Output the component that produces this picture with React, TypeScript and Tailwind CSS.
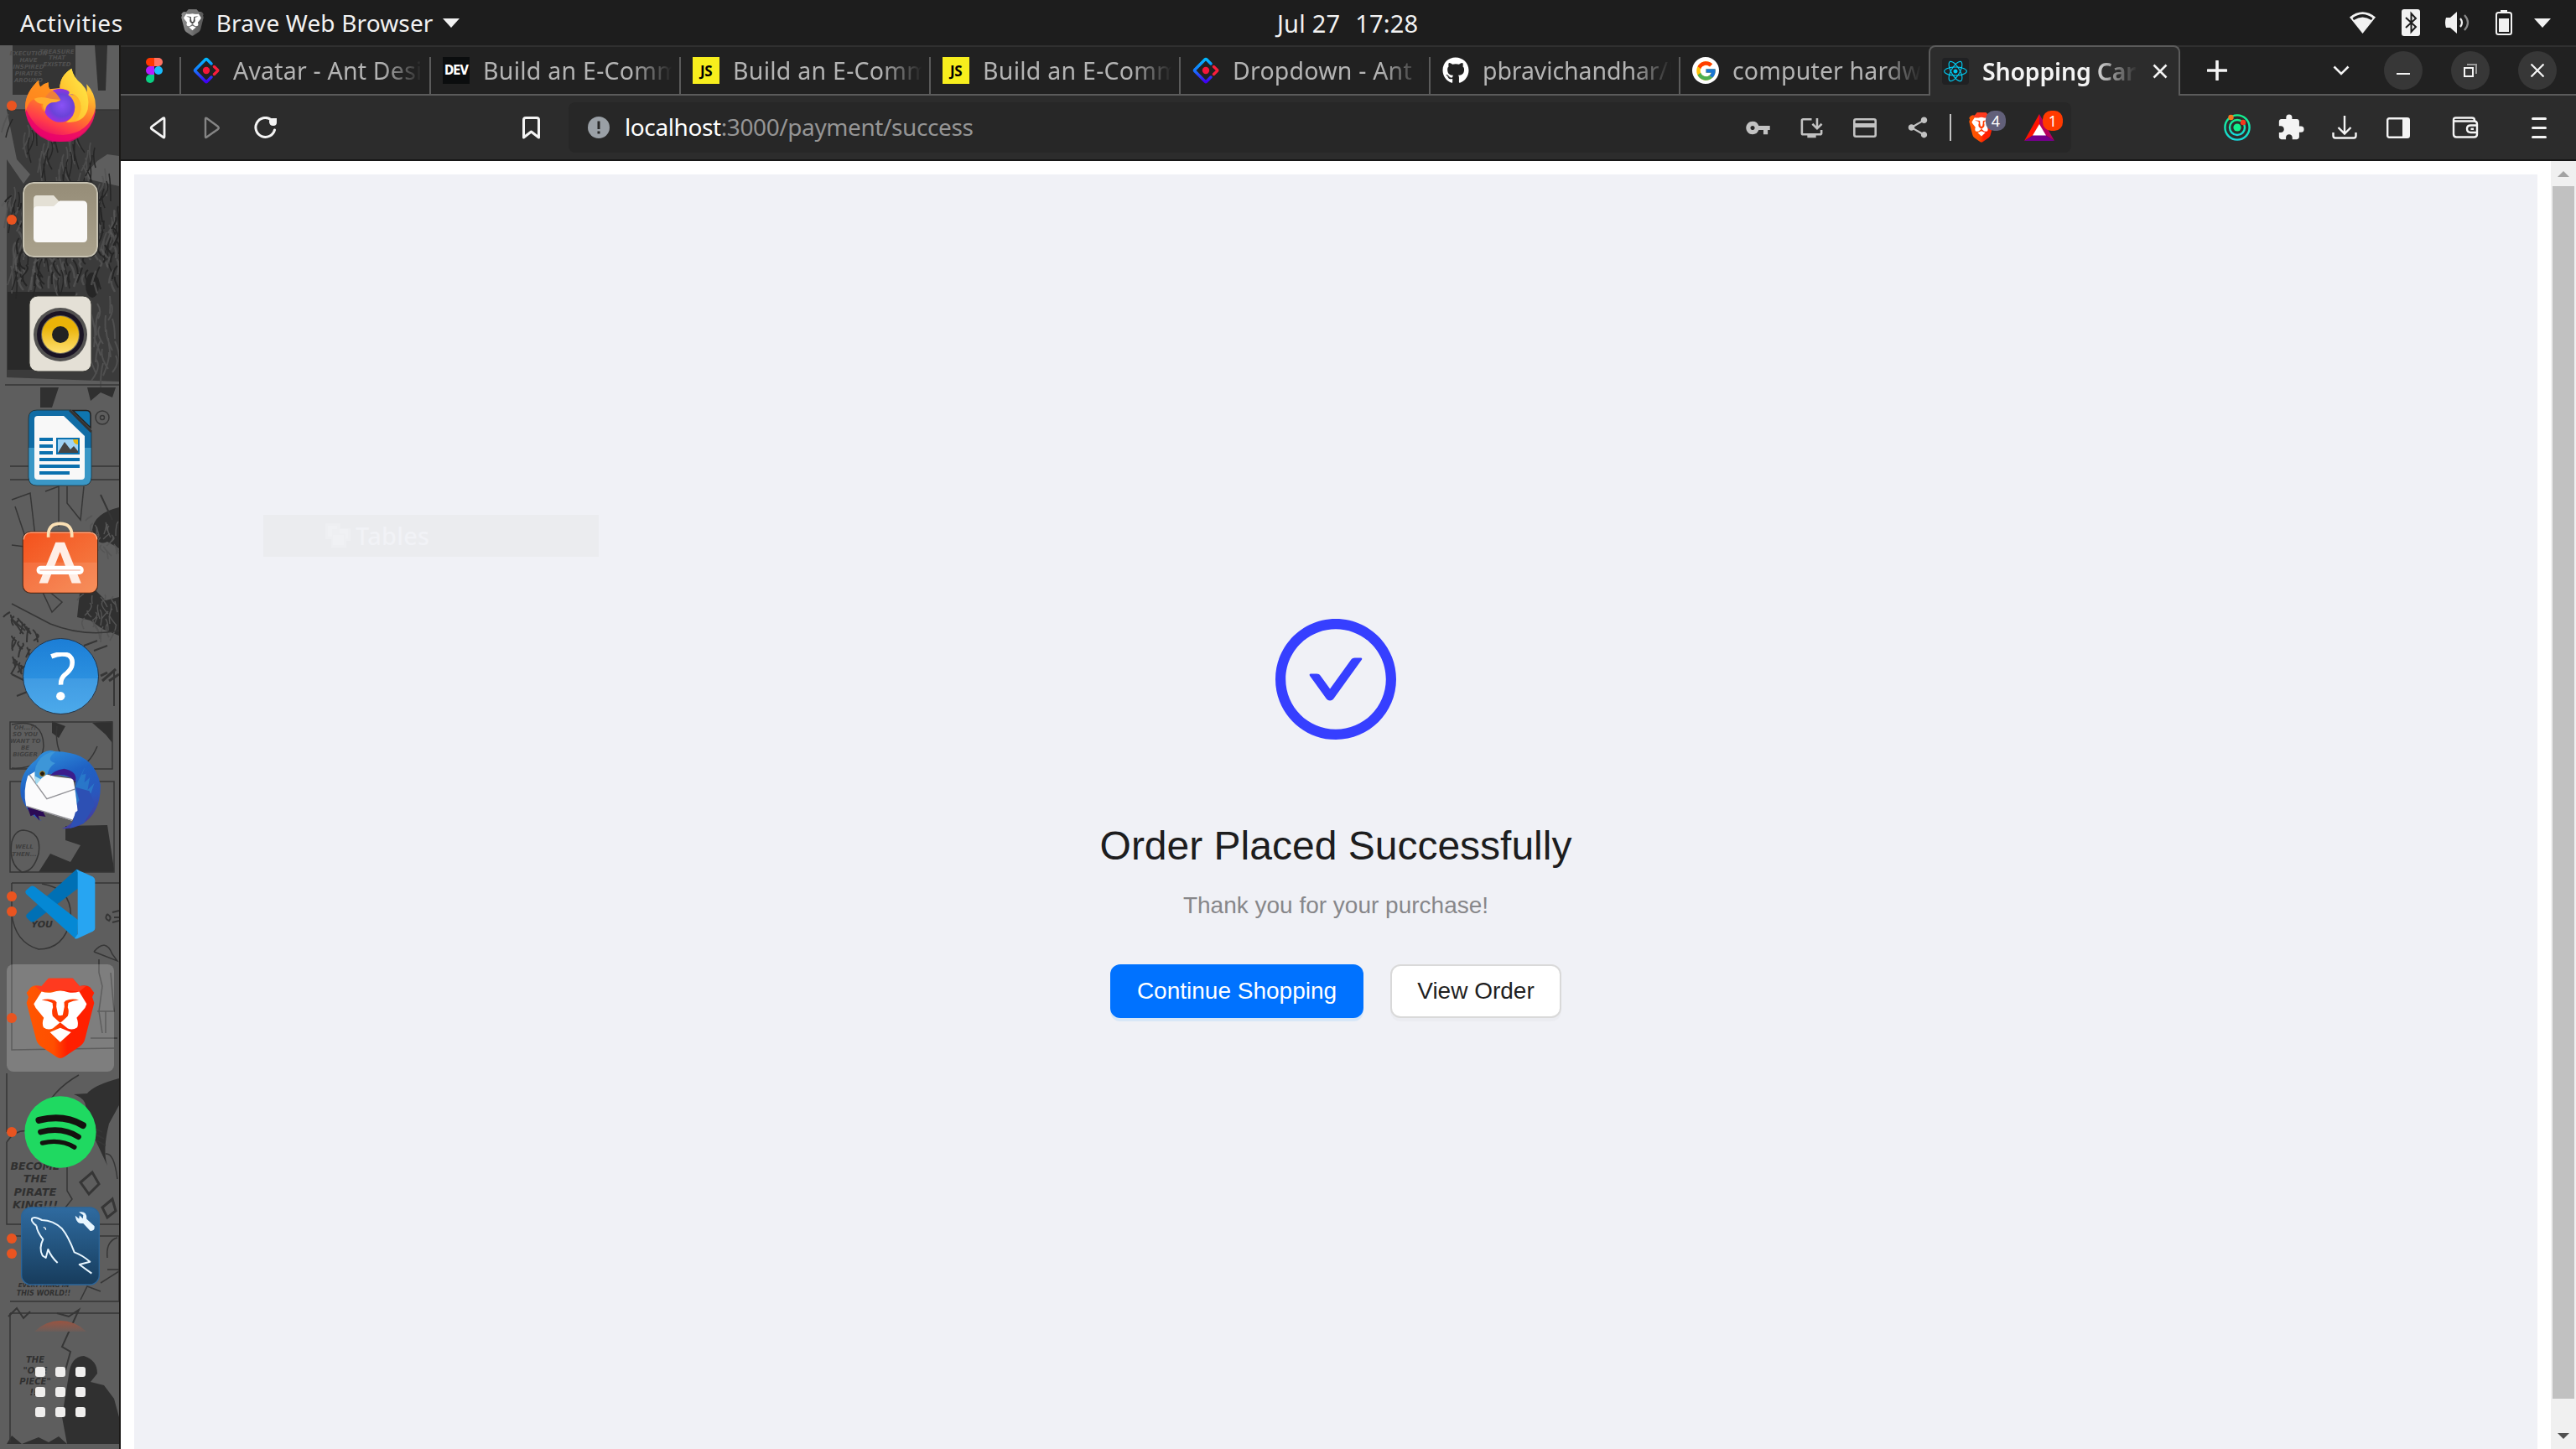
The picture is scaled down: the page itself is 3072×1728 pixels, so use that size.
import React from "react";
import { FaReact, FaGithub } from "react-icons/fa";
import { FcGoogle } from "react-icons/fc";
import { MdVpnKey, MdShare, MdExtension, MdOutlineInstallDesktop } from "react-icons/md";

const UI = "font-['Noto_Sans',sans-serif]";

/* ---------- shared marks ---------- */

function BraveLion({ className, mono = false, id }: { className?: string; mono?: boolean; id: string }) {
  return (
    <svg className={className} viewBox="94 916 247 292" preserveAspectRatio="none">
      <defs>
        <linearGradient id={id} x1="0" x2="1">
          <stop offset="0" stopColor={mono ? "#8d8d8d" : "#ff5601"} />
          <stop offset="0.4" stopColor={mono ? "#7a7a7a" : "#ff4f00"} />
          <stop offset="0.6" stopColor={mono ? "#666" : "#ff1f00"} />
          <stop offset="1" stopColor={mono ? "#5a5a5a" : "#ff2000"} />
        </linearGradient>
      </defs>
      <path
        d="M175 918H262L286 946Q312 940 324 950L339 970L332 985L339 1006L306 1136Q302 1152 288 1162L232 1200Q217 1210 203 1200L147 1162Q134 1152 130 1136L96 1006L103 985L96 970L112 950Q124 940 150 946Z"
        fill={`url(#${id})`}
      />
      <path d="M175 918H262L286 946L310 945L286 966L217 960L150 966L125 945L150 946Z" fill={mono ? "#777" : "#ff3a1f"} />
      <path
        d="M150 966Q170 972 190 968Q217 958 245 968Q265 972 285 966L312 1010L306 1024L276 1060Q284 1080 278 1094Q262 1106 244 1098L217 1076L190 1098Q172 1106 157 1094Q150 1080 158 1060L129 1024L122 1010ZM180 1112L217 1096L256 1112L217 1147Z"
        fill="#fff"
      />
      <path
        d="M150 996Q176 988 198 998L204 1004L203 1020L209 1050L217 1052L226 1050L232 1020L231 1004L237 998Q259 988 284 996Q262 998 246 1006L244 1022Q250 1036 244 1054L222 1074L217 1076L212 1074L190 1054Q185 1036 191 1022L189 1006Q172 998 150 996Z"
        fill={mono ? "#4b4b4b" : "#ff3a00"}
      />
    </svg>
  );
}

function AntdLogo({ id }: { id: string }) {
  return (
    <svg className="h-8 w-8" viewBox="0 0 32 32" fill="none" strokeWidth="3.4" strokeLinejoin="round" strokeLinecap="round">
      <defs>
        <linearGradient id={id} x1="0" y1="0" x2="0" y2="1">
          <stop offset="0" stopColor="#00b7ff" />
          <stop offset="0.5" stopColor="#1677ff" />
          <stop offset="1" stopColor="#4100f5" />
        </linearGradient>
      </defs>
      <path d="M22 8L16.8 2.8Q16 2 15.2 2.8L2.8 15.2Q2 16 2.8 16.8L15.2 29.2Q16 30 16.8 29.2L22 24" stroke={`url(#${id})`} />
      <path d="M25.5 11.5L29.5 15.4Q30 16 29.5 16.6L25.5 20.5" stroke="#fa1e3c" />
      <circle cx="16" cy="16" r="4.2" fill="#f5173a" />
    </svg>
  );
}

function Figma() {
  return (
    <svg className="h-[30px] w-5" viewBox="0 0 20 30">
      <path d="M5 0H10V10H5A5 5 0 0 1 5 0Z" fill="#ff3700" />
      <path d="M10 0H15A5 5 0 0 1 15 10H10Z" fill="#ff7262" />
      <path d="M5 10H10V20H5A5 5 0 0 1 5 10Z" fill="#b61aff" />
      <circle cx="15" cy="15" r="5" fill="#19bcfe" />
      <path d="M5 20H10V25A5 5 0 1 1 5 20Z" fill="#0acf83" />
    </svg>
  );
}

/* ---------- system bar ---------- */

function TopBar() {
  return (
    <header className={`relative flex h-[54px] shrink-0 items-center bg-[#1d1d1d] text-[28px] leading-none text-[#f2f2f2] ${UI}`}>
      <span className="ml-6 tracking-[0.6px]">Activities</span>
      <BraveLion id="bm" mono className="ml-[69px] h-8 w-[27px]" />
      <span className="ml-[15px] tracking-[0.15px]">Brave Web Browser</span>
      <svg className="ml-[11px] h-[11px] w-5" viewBox="0 0 20 11"><path d="M0 0H20L10 11Z" fill="#f2f2f2" /></svg>
      <div className="absolute left-[1523px] flex gap-[18px] text-[29px]">
        <span className="tracking-[0.2px]">Jul 27</span>
        <span className="tracking-[0.2px]">17:28</span>
      </div>
      <div className="ml-auto mr-[30px] flex items-center">
        <svg className="h-[26px] w-[31px]" viewBox="0 0 31 26">
          <path d="M15.500 26L0 6.500Q15.500 -6 31 6.500Z" fill="#f2f2f2" />
          <path d="M3.500 7.500Q15.500 -1.500 27.500 7.500L26 10Q15.500 3 5 10Z" fill="#1d1d1d" />
        </svg>
        <svg className="ml-[31px] h-8 w-[22px]" viewBox="0 0 22 32">
          <rect width="22" height="32" rx="3" fill="#f2f2f2" />
          <path d="M5 10L17 21L11.500 27V5L17 11L5 22" fill="none" stroke="#1d1d1d" strokeWidth="2" />
        </svg>
        <svg className="ml-[30px] h-[26px] w-[30px]" viewBox="0 0 30 26" fill="none">
          <path d="M1 7H6L14 0V26L6 19H1Q-1 13 1 7Z" fill="#f2f2f2" />
          <path d="M18 8Q22 13 18 18" stroke="#f2f2f2" strokeWidth="2.200" />
          <path d="M23 4Q31 13 23 22" stroke="#8a8a8a" strokeWidth="2.200" />
        </svg>
        <svg className="ml-[30px] h-[30px] w-5" viewBox="0 0 20 30">
          <rect x="6" width="8" height="3" fill="#f2f2f2" />
          <rect x="1" y="3" width="18" height="26" rx="2.500" fill="none" stroke="#f2f2f2" strokeWidth="2" />
          <rect x="4" y="10" width="12" height="16" fill="#f2f2f2" />
        </svg>
        <svg className="ml-[26px] h-[11px] w-5" viewBox="0 0 20 11"><path d="M0 0H20L10 11Z" fill="#f2f2f2" /></svg>
      </div>
    </header>
  );
}

/* ---------- dock ---------- */

function strokes(count: number, x0: number, y0: number, w: number, h: number, len: number) {
  return Array.from({ length: count }, (_, i) => {
    const x = x0 + ((i * 37) % w);
    const y = y0 + ((i * 53) % h);
    return `M${x} ${y}q${((i * 7) % 13) - 6} ${len / 2} ${((i * 11) % 17) - 8} ${len + ((i * 5) % 12)}`;
  }).join("");
}

function DockWallpaper() {
  const hatch = strokes(60, 10, 136, 128, 190, 22);
  const foliage = strokes(70, 10, 238, 130, 100, 8);
  const lowHatch = strokes(30, 92, 350, 48, 84, 18);
  const shade = strokes(24, 100, 708, 40, 44, 8);
  const grass = strokes(30, 12, 730, 34, 76, 6);
  const hair = strokes(20, 110, 615, 32, 40, 6);
  const lettering = "font-['DejaVu_Sans',sans-serif] font-bold italic";
  return (
    <svg className="absolute inset-0 h-full w-full" viewBox="0 54 142 1674" fill="none" stroke="#363636" strokeWidth="1.500">
      <g stroke="none" fill="#303030">
        <path d="M15 54H90V113H15Z" fill="#343434" />
        <path d="M113 54H128L126 108H117Z" />
        <path d="M8 131H142V186L128 184L116 192L103 206L106 214L142 222V455L8 450V190L28 219L36 208L20 190Z" fill="#3b3b3b" />
        <path d="M9 348H90V441H9Z" fill="#292929" />
        <path d="M48 462H70L62 486H48ZM104 462H138L134 474L120 468L108 478Z" />
        <path d="M142 605Q112 612 110 632Q116 652 128 646L142 654Z" />
        <path d="M95 708L114 704L126 716L142 712V758L122 750L108 740L92 736Z" />
        <path d="M62 860L78 866L70 880L62 874ZM110 862L134 860V886L126 876Z" />
        <path d="M78 985L128 984L136 1036V1040H46L60 1018L84 1028L96 1008L78 1002Z" />
        <path d="M142 1286Q112 1294 104 1304L88 1305Q108 1312 100 1330L128 1390Q122 1372 130 1340L142 1318Z" />
        <path d="M82 1640Q84 1618 100 1617Q116 1622 116 1638L108 1648L124 1652L136 1668L142 1690V1722H80L74 1690L78 1664Z" />
        <path d="M8 1722L14 1712L26 1722L46 1714L58 1720L70 1713L80 1722Z" />
        <ellipse cx="110" cy="340" rx="8" ry="15" fill="#262626" />
      </g>
      <path d={hatch} stroke="#525252" strokeWidth="1.800" opacity="0.800" />
      <path d={hatch} stroke="#262626" transform="translate(5 6)" />
      <path d={foliage} stroke="#595959" strokeWidth="2.500" opacity="0.700" />
      <path d={foliage} stroke="#252525" strokeWidth="2" transform="translate(4 -5)" />
      <path d={lowHatch} stroke="#505050" strokeWidth="2" />
      <path d={shade} stroke="#545454" />
      <path d={grass} stroke="#343434" strokeWidth="2" />
      <path d={hair} stroke="#555" />
      <path d="M8 131H142M6 459H142M12 556H142M12 572H142M14 596L36 588L42 640M18 604L42 676M54 586L70 580V628M80 580V600L96 620L100 580M52 700L74 718L62 730L48 700M14 650L46 654M14 720L60 744Q100 760 142 752" />
      <path d="M15 790L34 798M14 804L34 814M16 740L30 752M20 830L40 822M100 770L116 764M112 776L128 770M120 590L134 620M136 800V842" strokeWidth="2" />
      <path d="M120 806L128 802M122 812L138 798M130 812L142 804" strokeWidth="3" />
      <path d="M12 861H134V917H12ZM12 932H136V1040H12ZM14 1053H142M14 1053V1252L136 1250M8 1280V1350M8 1362V1460H142M12 1474H142V1552H12M12 1566H142M12 1566V1720" />
      <path d="M14 864Q52 856 52 890Q50 918 14 916M68 866Q64 900 86 914Q104 918 116 890M28 990Q50 992 46 1018Q40 1040 26 1040Q10 1030 14 1004Q18 990 28 990Z" />
      <path d="M50 1054Q88 1060 84 1098Q76 1132 46 1132Q18 1124 14 1090M94 1282Q62 1300 50 1330M8 1362Q20 1344 40 1350M80 1384V1420L86 1430L78 1440" />
      <path d="M112 1135Q126 1118 134 1138L140 1146L112 1135M118 1144V1160L122 1176L118 1206L122 1232M132 1160L136 1206H116M126 1206V1232M108 1238H140" />
      <path d="M10 1570L20 1560L28 1572L36 1564M68 1566L82 1570L94 1562L74 1606L84 1612L78 1634" strokeWidth="2" />
      <path d="M100 1340L122 1350M100 1346L124 1358M100 1352L126 1366M126 1376Q136 1374 140 1406M128 1500Q126 1480 140 1476M128 1514H142M120 1530L142 1516M96 1550L104 1534L120 1540" />
      <circle cx="122" cy="498" r="8" /><circle cx="122" cy="498" r="2.500" />
      <path d="M96 1410L110 1398L118 1412L106 1424ZM122 1440L134 1430L138 1444L128 1452Z" strokeWidth="3" />
      <g fill="#404040" stroke="none" fontSize="7" className={lettering} textAnchor="middle">
        <g fill="#505050"><text x="34" y="66">EXECUTION</text><text x="34" y="74">HAVE</text><text x="34" y="82">INSPIRED</text><text x="34" y="90">PIRATES</text><text x="34" y="98">AROUND</text><text x="68" y="64">TREASURE</text><text x="68" y="71">THAT</text><text x="68" y="79">EXISTED</text></g>
        <text x="30" y="870">OH...?!</text><text x="30" y="878">SO YOU</text><text x="30" y="886">WANT TO</text><text x="30" y="894">BE</text><text x="30" y="902">BIGGER</text>
        <text x="29" y="1012">WELL</text><text x="29" y="1021">THEN...</text>
      </g>
      <g fill="#303030" stroke="none" fontSize="14" className={lettering} textAnchor="middle">
        <text x="50" y="1106" fontSize="11">YOU</text>
        <text x="42" y="1395" fontSize="12.500">BECOME</text><text x="42" y="1410" fontSize="13">THE</text><text x="42" y="1426" fontSize="13">PIRATE</text><text x="42" y="1441" fontSize="13">KING!!!</text>
        <text x="52" y="1535" fontSize="7">EVERYTHING IN</text><text x="52" y="1545" fontSize="8">THIS WORLD!!</text>
        <text x="42" y="1625" fontSize="10">THE</text><text x="42" y="1638" fontSize="10">"ONE</text><text x="42" y="1651" fontSize="10">PIECE"</text><text x="40" y="1664" fontSize="10">!!</text>
      </g>
      <path d="M128 1090Q124 1096 130 1098Q134 1094 128 1090M134 1088L142 1086M136 1094H142M134 1100L142 1098" strokeWidth="2" />
    </svg>
  );
}

function Firefox() {
  return (
    <svg className="h-[88px] w-[86px] -translate-y-px" viewBox="88 92 256 264">
      <defs>
        <linearGradient id="ff1" x1="0.750" y1="0" x2="0.350" y2="1">
          <stop offset="0" stopColor="#fff44f" /><stop offset="0.300" stopColor="#ffb52e" /><stop offset="0.550" stopColor="#ff7a2a" /><stop offset="0.780" stopColor="#ff3b4b" /><stop offset="1" stopColor="#e5006e" />
        </linearGradient>
        <radialGradient id="ff2" cx="0.550" cy="0.500" r="0.550">
          <stop offset="0" stopColor="#8a52f6" /><stop offset="0.600" stopColor="#6a43d8" /><stop offset="1" stopColor="#a62be0" />
        </radialGradient>
        <linearGradient id="ff3" x1="1" y1="0" x2="0" y2="1">
          <stop offset="0" stopColor="#fff04a" /><stop offset="0.600" stopColor="#ffc832" /><stop offset="1" stopColor="#ff8a28" />
        </linearGradient>
      </defs>
      <path d="M90 232Q90 180 138 136Q138 150 144 160Q156 148 173 144Q172 160 178 168L214 164Q214 120 256 94Q262 126 292 150Q306 164 312 178L310 150Q342 184 342 228A126 126 0 0 1 90 232Z" fill="url(#ff1)" />
      <path d="M90 232A126 126 0 0 0 342 236Q320 326 226 332Q130 334 90 232Z" fill="#e8006c" opacity="0.750" />
      <circle cx="215" cy="226" r="60" fill="url(#ff2)" />
      <path d="M214 164Q214 120 256 94Q262 126 292 150Q324 190 314 240Q300 290 240 286Q286 260 288 224Q284 196 264 186L244 188Q260 172 214 164Z" fill="url(#ff3)" />
      <path d="M244 188Q272 184 286 214Q296 240 280 268Q262 290 236 286Q268 268 268 232Q266 204 244 188Z" fill="#ffb62c" />
      <path d="M90 232Q90 180 138 136Q138 150 144 160Q156 148 173 144Q172 160 178 168Q200 176 217 206Q206 216 182 216Q160 224 162 250Q146 240 148 220Q130 216 122 204Q100 212 92 250Z" fill="#ff8c1c" opacity="0.850" />
      <path d="M122 202Q146 192 180 202L217 206Q204 216 184 216Q164 222 162 246Q152 234 154 220Q130 220 122 202Z" fill="#ffad2e" />
    </svg>
  );
}

function Files() {
  return (
    <div className="flex h-[90px] w-[90px] items-center justify-center rounded-[13px] border-2 border-[#c5c0b0] bg-gradient-to-b from-[#968d78] to-[#a9a18c] outline outline-1 outline-[#2b2b2b]">
      <svg className="h-[58px] w-[66px]" viewBox="0 0 66 58">
        <path d="M5 0H25L34 10V22H1V5Q1 0 5 0Z" fill="#e4e0d5" />
        <path d="M1 18Q1 13 6 13H25L32 6.500H60Q65 6.500 65 12V51Q65 56 60 56H6Q1 56 1 51Z" fill="#f9f8f7" />
      </svg>
    </div>
  );
}

function Rhythmbox() {
  return (
    <svg className="h-[92px] w-[76px]" viewBox="0 0 76 92">
      <defs><linearGradient id="rb" x1="0" y1="0" x2="0" y2="1"><stop offset="0.300" stopColor="#eab308" /><stop offset="1" stopColor="#ffe070" /></linearGradient></defs>
      <rect x="1" y="1" width="74" height="90" rx="10" fill="#e4e0d6" stroke="#3a3a36" />
      <circle cx="38" cy="47" r="32" fill="#535251" />
      <circle cx="38" cy="47" r="25.500" fill="#6e6a5c" stroke="#1a1424" strokeWidth="5" />
      <circle cx="38" cy="47" r="22" fill="url(#rb)" />
      <circle cx="38" cy="47" r="10" fill="#222" />
    </svg>
  );
}

function Writer() {
  return (
    <svg className="h-[92px] w-[78px]" viewBox="0 0 78 92">
      <path d="M11 1H50L76 27V81Q76 91 66 91H11Q1 91 1 81V11Q1 1 11 1Z" fill="#106ca5" stroke="#24383f" />
      <path d="M1.500 46H75.500V81Q75.500 90.500 66 90.500H11Q1.500 90.500 1.500 81Z" fill="#3a97c6" />
      <path d="M54 1.500H70Q75 1.500 75 7V22Z" fill="#0f76b0" stroke="#222" strokeWidth="1.500" />
      <path d="M50 1L76 27" stroke="#333" strokeWidth="3" />
      <path d="M12 8H43L68 32V80Q68 84 64 84H12Q8 84 8 80V12Q8 8 12 8Z" fill="#f8f8f8" />
      <path d="M14 36H30M14 44H30M14 52H30M14 60H62M14 68H62M14 76H50" stroke="#0a70ae" strokeWidth="4" />
      <rect x="35" y="35" width="26" height="18" fill="#9fd3f5" stroke="#0a70ae" strokeWidth="2" />
      <path d="M54 36H60V42Q55 42 54 36Z" fill="#e8b80c" />
      <path d="M36 52L44 39L51 48L55 44L60 50V52Z" fill="#454545" />
    </svg>
  );
}

function SoftwareStore() {
  return (
    <svg className="h-[87px] w-[92px] -translate-y-[5px]" viewBox="80 484 274 260">
      <defs><linearGradient id="sw" x1="0" y1="0" x2="1" y2="1"><stop offset="0" stopColor="#f4511c" /><stop offset="1" stopColor="#f5834a" /></linearGradient></defs>
      <rect x="83" y="520" width="267" height="219" rx="28" fill="url(#sw)" stroke="#42281c" strokeWidth="3" />
      <path d="M86 630H347V708Q347 736 320 736H113Q86 736 86 708Z" fill="#fff" opacity="0.100" />
      <path d="M112 523H322Q346 524 348 548M86 548Q88 524 112 523" stroke="#ffc0a0" strokeWidth="3" fill="none" />
      <path d="M174 540V530Q176 491 216 491Q256 491 258 530V540" fill="none" stroke="#fbe0b4" strokeWidth="11" />
      <path d="M200 558H232L291 704H258L216 592L172 704H141Z" fill="#ffeee6" />
      <rect x="132" y="642" width="168" height="30" rx="15" fill="#fff" />
      <path d="M146 657H286" stroke="#f9d2c6" strokeWidth="6" strokeLinecap="round" />
    </svg>
  );
}

function Help() {
  return (
    <div className="relative flex h-[91px] w-[91px] items-center justify-center overflow-hidden rounded-full border border-[#24364a] bg-gradient-to-b from-[#1c7ed6] to-[#38a0e8]">
      <div className="absolute inset-x-0 bottom-0 h-[42px] bg-white/10" />
      <svg className="relative h-[58px] w-[34px] translate-x-[3px] translate-y-px" viewBox="180 958 88 168">
        <path d="M184 972Q218 958 244 968Q262 980 254 1008Q248 1022 230 1036Q216 1048 217 1070" fill="none" stroke="#fff" strokeWidth="16" />
        <circle cx="216" cy="1109" r="15" fill="#fff" />
      </svg>
    </div>
  );
}

function Thunderbird() {
  return (
    <svg className="h-24 w-[98px]" viewBox="70 102 293 288">
      <defs><linearGradient id="tb" x1="0.300" y1="0" x2="0.700" y2="1"><stop offset="0" stopColor="#2f8fdc" /><stop offset="0.350" stopColor="#1f62c4" /><stop offset="0.700" stopColor="#2a56bc" /><stop offset="1" stopColor="#473a9c" /></linearGradient></defs>
      <path d="M150 358Q96 330 76 270Q62 190 130 138Q160 96 196 108Q226 108 250 114Q340 130 360 228Q362 330 292 370Q256 388 222 384Q250 374 262 356L272 206L196 190L110 190L98 300Q120 330 150 358Z" fill="url(#tb)" />
      <path d="M96 300L110 340L124 334L142 356L138 338L164 342L156 328L166 322Z" fill="#2b0b55" />
      <path d="M100 196L126 180L196 198L262 206L272 260L278 320L258 356L94 304Q82 250 100 196Z" fill="#fbfbfc" />
      <path d="M106 192L168 278L272 242M94 304L258 354" fill="none" stroke="#929297" strokeWidth="4" />
      <path d="M180 196Q240 184 262 210L270 216Q280 180 230 170Q190 176 180 196Z" fill="#3b1d8c" />
      <path d="M130 226Q116 176 136 146Q156 112 200 108Q160 140 198 150Q176 164 170 190Q150 200 130 226Z" fill="#3d96d8" />
      <path d="M124 196L130 228L146 208Z" fill="#a7dcf0" />
      <circle cx="152" cy="188" r="9" fill="#211c12" stroke="#b48a20" strokeWidth="3" />
      <path d="M306 160L294 192L308 188L302 220L322 202L314 246L338 222L326 258L300 264L276 300L268 240Z" fill="#2b86ce" opacity="0.650" />
      <path d="M270 236L284 282L276 296L282 318L270 326L262 356L250 384L300 366L340 300L320 250Z" fill="#2d50b4" />
    </svg>
  );
}

function VSCode() {
  return (
    <svg className="h-[84px] w-[84px]" viewBox="88 526 256 256">
      <path d="M274 528L96 690Q88 696 94 704L108 718Q114 722 122 717L282 596V530Z" fill="#0070b5" />
      <path d="M278 780Q270 780 264 774L92 618Q86 610 92 604L108 590Q114 586 122 591L280 712Z" fill="#0588d4" />
      <path d="M274 528L334 555Q342 560 342 568V742Q342 750 334 754L278 780Q264 782 270 776L279 764V540Z" fill="#27a5f2" />
    </svg>
  );
}

function Spotify() {
  return (
    <svg className="h-[86px] w-[86px]" viewBox="0 0 256 256">
      <circle cx="128" cy="128" r="127" fill="#1fd961" />
      <g fill="none" stroke="#14120f" strokeLinecap="round">
        <path d="M52 86Q140 64 208 104" strokeWidth="24" /><path d="M58 128Q134 108 192 145" strokeWidth="20" /><path d="M64 167Q128 152 178 182" strokeWidth="16" />
      </g>
    </svg>
  );
}

function MySQL() {
  return (
    <svg className="h-[94px] w-[94px]" viewBox="75 478 282 280">
      <defs><linearGradient id="my" x1="0" y1="0" x2="0" y2="1"><stop offset="0" stopColor="#2f6ba0" /><stop offset="1" stopColor="#173c5c" /></linearGradient></defs>
      <rect x="77" y="480" width="278" height="276" rx="34" fill="url(#my)" stroke="#2b659a" strokeWidth="4" />
      <path d="M130 545Q110 530 114 520Q122 510 150 525Q190 525 222 556Q244 582 266 640Q294 650 322 674L284 684L328 716M130 545Q134 570 154 594Q138 626 152 652L164 660L172 630Q184 658 206 678" fill="none" stroke="#e8f6ff" strokeWidth="6" strokeLinejoin="round" />
      <path d="M156 550Q166 550 164 560Z" stroke="#e8f6ff" strokeWidth="3" />
      <path d="M286 512L298 524L300 506L288 498Q310 496 308 522L336 548Q338 562 324 562L298 534Q276 540 272 514L284 524Z" fill="#e8f6ff" stroke="#e8f6ff" strokeWidth="4" />
    </svg>
  );
}

type DockEntry = { name: string; icon: React.ReactNode; dots: number; active?: boolean };

const dock: DockEntry[] = [
  { name: "Firefox", icon: <Firefox />, dots: 1 },
  { name: "Files", icon: <Files />, dots: 1 },
  { name: "Rhythmbox", icon: <Rhythmbox />, dots: 0 },
  { name: "Writer", icon: <Writer />, dots: 0 },
  { name: "Software", icon: <SoftwareStore />, dots: 0 },
  { name: "Help", icon: <Help />, dots: 0 },
  { name: "Thunderbird", icon: <Thunderbird />, dots: 0 },
  { name: "Code", icon: <VSCode />, dots: 2 },
  { name: "Brave", icon: <BraveLion id="bd" className="h-[97px] w-[82px]" />, dots: 1, active: true },
  { name: "Spotify", icon: <Spotify />, dots: 1 },
  { name: "Workbench", icon: <MySQL />, dots: 2 },
];

function Dock() {
  return (
    <nav className="relative flex w-36 shrink-0 flex-col overflow-hidden border-r-2 border-[#1b1917] bg-[#5e5e5e] pl-2 pt-2">
      <DockWallpaper />
      <div className="relative flex flex-col gap-2">
        {dock.map((d) => (
          <div
            key={d.name}
            aria-label={d.name}
            className={`relative flex h-32 w-32 items-center justify-center rounded-lg ${d.active ? "bg-white/20" : ""}`}
          >
            {d.icon}
            <div className="absolute inset-y-0 left-0 flex flex-col justify-center gap-1.5">
              {Array.from({ length: d.dots }, (_, i) => (
                <span key={i} className="h-3 w-3 rounded-full bg-[#e95420]" />
              ))}
            </div>
          </div>
        ))}
      </div>
      <div className="relative ml-8 mt-[25px] h-[13px] w-16 overflow-hidden">
        <div className="h-[86px] w-[86px] -translate-x-[11px] rounded-full bg-gradient-to-b from-[#9a5340] to-[#5e5e5e] to-[18%]" />
      </div>
      <div className="relative ml-[34px] mt-[42px] grid w-[60px] grid-cols-3 gap-3">
        {Array.from({ length: 9 }, (_, i) => (
          <span key={i} className="h-3 w-3 rounded-[3px] bg-[#efeeed]" />
        ))}
      </div>
    </nav>
  );
}

/* ---------- browser chrome ---------- */

const jsIcon = <span className="flex h-8 w-8 items-center justify-center bg-[#f7ee1d] pt-0.5 text-[17px] font-bold tracking-[-0.5px] text-black">JS</span>;

const tabs: { title: string; icon: React.ReactNode; tracking?: string }[] = [
  { title: "Avatar - Ant Design", icon: <AntdLogo id="a1" />, tracking: "tracking-[0.2px]" },
  {
    title: "Build an E-Commerce",
    icon: (
      <span className="flex h-8 w-8 items-center justify-center bg-[#0b0d0e] font-['DejaVu_Sans_Condensed',sans-serif] text-[15px] font-bold tracking-[-1px] text-white">DEV</span>
    ),
    tracking: "tracking-[0.25px]",
  },
  { title: "Build an E-Commerce", icon: jsIcon, tracking: "tracking-[0.25px]" },
  { title: "Build an E-Commerce", icon: jsIcon, tracking: "tracking-[0.25px]" },
  { title: "Dropdown - Ant Design", icon: <AntdLogo id="a2" />, tracking: "tracking-[0.2px]" },
  { title: "pbravichandhar/E", icon: <FaGithub className="h-8 w-8 text-white" />, tracking: "tracking-[-0.1px]" },
  {
    title: "computer hardware",
    icon: <span className="flex h-8 w-8 items-center justify-center rounded-full bg-white"><FcGoogle className="h-[27px] w-[27px]" /></span>,
    tracking: "tracking-[0.15px]",
  },
];

const fade = "min-w-0 flex-1 overflow-hidden whitespace-nowrap leading-[38px]";

function WindowButton({ children }: { children: React.ReactNode }) {
  return <span className="flex h-[46px] w-[46px] items-center justify-center rounded-full bg-[#373737]">{children}</span>;
}

function TabStrip() {
  return (
    <div className={`flex h-[60px] shrink-0 border-t-2 border-[#303030] bg-[#212121] text-[28.5px] text-[#b4b4b4] ${UI}`}>
      <div className="flex w-[70px] items-center border-b-2 border-b-[#5b5b5b] pl-[30px]"><Figma /></div>
      {tabs.map((t, i) => (
        <div key={i} className="relative flex w-[298px] items-center border-b-2 border-b-[#5b5b5b] pl-4 pr-1.5">
          <span className="absolute bottom-0 left-0 h-11 w-0.5 bg-[#5b5b5b]" />
          {t.icon}
          <span className={`ml-4 [mask-image:linear-gradient(to_right,black_78%,transparent_99%)] ${t.tracking} ${fade}`}>{t.title}</span>
        </div>
      ))}
      <div className="-mt-0.5 flex w-[300px] shrink-0 items-center rounded-t-lg border-2 border-b-0 border-[#5b5b5b] bg-[#2c2c2c] pl-[14px] pr-[13px] font-semibold text-[#f4f4f4]">
        <span className="flex h-8 w-8 items-center justify-center rounded bg-[#202123]"><FaReact className="h-7 w-7 text-[#00c8ee]" /></span>
        <span className={`ml-4 tracking-[-0.2px] [mask-image:linear-gradient(to_right,black_68%,transparent_98%)] ${fade}`}>Shopping Cart</span>
        <svg className="ml-[14px] h-[18px] w-[18px]" viewBox="0 0 18 18"><path d="M1.500 1.500L16.500 16.500M16.500 1.500L1.500 16.500" stroke="#f4f4f4" strokeWidth="2.600" /></svg>
      </div>
      <div className="flex flex-1 items-center border-b-2 border-b-[#5b5b5b] pl-8 pr-[23px]">
        <svg className="h-6 w-6" viewBox="0 0 24 24"><path d="M12 1V23M1 12H23" stroke="#f4f4f4" strokeWidth="3.600" strokeLinecap="round" /></svg>
        <svg className="ml-auto h-3 w-5" viewBox="0 0 20 12"><path d="M1.500 1.500L10 10L18.500 1.500" stroke="#f4f4f4" strokeWidth="2.600" fill="none" /></svg>
        <div className="ml-[41px] flex gap-[34px]">
          <WindowButton><span className="mt-2 h-0.5 w-4 bg-[#f4f4f4]" /></WindowButton>
          <WindowButton>
            <svg className="h-4 w-4" viewBox="0 0 16 16" fill="none" strokeWidth="2"><path d="M4 1H15V12" stroke="#999" /><rect x="1" y="5" width="10" height="10" stroke="#f4f4f4" /></svg>
          </WindowButton>
          <WindowButton><svg className="h-4 w-4" viewBox="0 0 16 16"><path d="M0.500 0.500L15.500 15.500M15.500 0.500L0.500 15.500" stroke="#f4f4f4" strokeWidth="2.200" /></svg></WindowButton>
        </div>
      </div>
    </div>
  );
}

function Toolbar() {
  return (
    <div className={`flex h-[78px] shrink-0 items-center border-b-2 border-[#171717] bg-[#2c2c2c] ${UI}`}>
      <svg className="ml-[34px] h-[27px] w-5" viewBox="0 0 20 27"><path d="M18 3V24Q18 26 16.500 24.500L3 15Q1.500 13.500 3 12L16.500 2Q18 1 18 3Z" fill="none" stroke="#f4f4f4" strokeWidth="2.800" /></svg>
      <svg className="ml-[45px] h-[27px] w-5" viewBox="0 0 20 27"><path d="M2 3V24Q2 26 3.500 24.500L17 15Q18.500 13.500 17 12L3.500 2Q2 1 2 3Z" fill="none" stroke="#858585" strokeWidth="2.400" /></svg>
      <svg className="ml-10 h-[27px] w-7" viewBox="0 0 28 27"><path d="M20 3.500A11.500 11.500 0 1 0 24.500 16" fill="none" stroke="#f4f4f4" strokeWidth="3" strokeLinecap="round" /><path d="M18 6Q18 2 22 2H27V7Q27 11 23 11Q18 11 18 6Z" fill="#f4f4f4" /></svg>
      <svg className="ml-[292px] h-[27px] w-[21px]" viewBox="0 0 21 27"><path d="M4 1.500H17Q19.500 1.500 19.500 4V25L10.500 18L1.500 25V4Q1.500 1.500 4 1.500Z" fill="none" stroke="#f4f4f4" strokeWidth="3" strokeLinejoin="round" /></svg>
      <div className="ml-[34px] flex h-[60px] w-[1792px] items-center rounded-lg bg-[#272727] pl-[23px]">
        <svg className="h-[26px] w-[26px]" viewBox="0 0 26 26"><circle cx="13" cy="13" r="13" fill="#9aa0a6" /><path d="M13 5.500V15M13 17.500V20.500" stroke="#272727" strokeWidth="3" /></svg>
        <span className="ml-[18px] -translate-y-px whitespace-nowrap text-[28px] tracking-[-0.4px] text-[#959595]"><span className="text-white">localhost</span>:3000/payment/success</span>
        <div className="ml-auto flex items-center text-[#c2c2c2]">
          <MdVpnKey className="h-[31px] w-[31px]" />
          <MdOutlineInstallDesktop className="ml-[33px] h-[31px] w-[31px]" />
          <svg className="ml-[34px] h-[23px] w-7" viewBox="0 0 28 23"><rect x="1.300" y="1.300" width="25.400" height="20.400" rx="2" fill="none" stroke="currentColor" strokeWidth="2.600" /><rect x="1" y="6" width="26" height="5" fill="currentColor" /></svg>
          <MdShare className="ml-[34px] h-[30px] w-[30px]" />
          <span className="ml-[23px] h-8 w-0.5 bg-[#c2c2c2]" />
          <span className="relative ml-[21px] h-9 w-[30px]">
            <BraveLion id="bs" className="h-9 w-[30px]" />
            <span className="absolute -top-0.5 left-5 flex h-6 w-6 items-center justify-center rounded-[10px] bg-[#62607a] text-[18px] leading-none text-white">4</span>
          </span>
          <span className="relative ml-9 mr-5 h-8 w-9">
            <svg className="h-8 w-9" viewBox="0 0 36 32"><path d="M18 0V13L11 25L0 32Z" fill="#ff1200" /><path d="M18 0L36 32L25 25L18 13Z" fill="#b5005e" /><path d="M0 32L11 25H25L36 32Z" fill="#75008c" /><path d="M18 12L26 25.500H10Z" fill="#fff" /></svg>
            <span className="absolute -top-1 left-[22px] flex h-6 w-6 items-center justify-center rounded-[10px] bg-[#ff3a00] text-[18px] leading-none text-white">1</span>
          </span>
        </div>
      </div>
      <div className="ml-auto mr-[35px] flex items-center text-[#f4f4f4]">
        <svg className="h-8 w-8" viewBox="0 0 32 32" fill="none" strokeWidth="2.400">
          <defs><linearGradient id="rg" x1="0" y1="0" x2="0" y2="1"><stop offset="0" stopColor="#12f08c" /><stop offset="1" stopColor="#18d8dc" /></linearGradient></defs>
          <circle cx="16" cy="16" r="14.600" stroke="url(#rg)" /><circle cx="16" cy="16" r="9" stroke="url(#rg)" /><circle cx="16" cy="16" r="4.600" fill="#12f08c" />
          <circle cx="8.500" cy="4" r="3.200" fill="#f47a1c" /><circle cx="23" cy="10" r="3.200" fill="#f4391c" />
        </svg>
        <MdExtension className="ml-[31px] h-[34px] w-[34px]" />
        <svg className="ml-8 h-7 w-[30px]" viewBox="0 0 30 28" fill="none" stroke="currentColor" strokeWidth="2.400"><path d="M15 0V21M7.500 14L15 21.500L22.500 14M1.500 20V24Q1.500 26.500 4 26.500H26Q28.500 26.500 28.500 24V20" /></svg>
        <svg className="ml-[35px] h-[25px] w-7" viewBox="0 0 28 25"><rect x="1.200" y="1.200" width="25.600" height="22.600" rx="2" fill="none" stroke="currentColor" strokeWidth="2.400" /><rect x="19" y="1" width="8" height="23" fill="currentColor" /></svg>
        <svg className="ml-[50px] h-[26px] w-8" viewBox="0 0 32 26" fill="none" stroke="currentColor" strokeWidth="2.400"><path d="M2 4Q2 1.500 4.500 1.500H24Q27 1.500 27 4.500M2 4V21Q2 24.500 5.500 24.500H26.500Q30 24.500 30 21V9Q30 5.500 26.500 5.500H4.500Q2 5.500 2 4ZM30 10.500H22.500Q18 10.500 18 14.500Q18 19 22.500 19H30" /><path d="M22.500 14.800H26" /></svg>
        <span className="ml-[63px] flex flex-col gap-2"><i className="h-[3px] w-[18px] rounded bg-current" /><i className="h-[3px] w-[18px] rounded bg-current" /><i className="h-[3px] w-[18px] rounded bg-current" /></span>
      </div>
    </div>
  );
}

/* ---------- page ---------- */

function SuccessPage() {
  return (
    <div className="relative flex-1 bg-[#f0f1f6] pt-[530px] font-['Liberation_Sans',sans-serif]">
      <div className={`absolute left-[154px] top-[406px] flex h-[50px] w-[400px] items-center bg-[#ebecef] pl-[74px] text-[29px] font-medium tracking-[0.2px] text-[#f1f2f6] ${UI}`}>
        <svg className="mr-1 h-8 w-8" viewBox="0 0 32 32"><path d="M0 1H18V7H30V22H25V30H7V20H0Z" fill="#eeeff2" /><path d="M3 4H14V8H8V17H3ZM17 8H27V19H24V13H17ZM9 15H22V27H9Z" fill="#f0f1f4" /></svg>
        Tables
      </div>
      <div className="flex flex-col items-center">
        <svg className="h-36 w-36" viewBox="64 64 896 896" fill="#363fff">
          <path d="M699 353h-46.900c-10.200 0-19.900 4.900-25.900 13.300L469 584.300l-71.200-98.800c-6-8.300-15.600-13.300-25.900-13.300H325c-6.500 0-10.300 7.400-6.500 12.700l124.600 172.800a31.800 31.800 0 0 0 51.700 0l210.600-292c3.900-5.300.1-12.700-6.400-12.700z" />
          <path d="M512 64C264.600 64 64 264.600 64 512s200.600 448 448 448 448-200.600 448-448S759.400 64 512 64zm0 820c-205.400 0-372-166.600-372-372s166.600-372 372-372 372 166.600 372 372-166.600 372-372 372z" />
        </svg>
        <h1 className="mt-[95px] text-[48px] leading-[64px] text-[#1d1d1e]">Order Placed Successfully</h1>
        <p className="mt-[17px] text-[28px] leading-[44px] text-[#87878a]">Thank you for your purchase!</p>
        <div className="mt-12 flex gap-8 text-[28px]">
          <button className="h-16 w-[302px] rounded-xl bg-[#0072ff] text-white shadow-[0_4px_0_rgba(5,145,255,0.1)]">Continue Shopping</button>
          <button className="h-16 w-[204px] rounded-xl border-2 border-[#d9d9d9] bg-white text-[#1f1f1f] shadow-[0_4px_0_rgba(0,0,0,0.02)]">View Order</button>
        </div>
      </div>
    </div>
  );
}

function Scrollbar() {
  return (
    <div className="flex w-[30px] shrink-0 flex-col items-center bg-[#f0f0f0]">
      <svg className="mt-3 h-[7px] w-[14px]" viewBox="0 0 14 7"><path d="M0 7H14L7 0Z" fill="#a3a3a3" /></svg>
      <div className="mt-[11px] h-[1446px] w-[26px] bg-[#c1c1c1]" />
      <svg className="mt-[41px] h-[7px] w-[14px]" viewBox="0 0 14 7"><path d="M0 0H14L7 7Z" fill="#505050" /></svg>
    </div>
  );
}

export default function App() {
  return (
    <div className="flex h-[1728px] w-[3072px] flex-col overflow-hidden bg-[#1d1d1d]">
      <TopBar />
      <div className="flex min-h-0 flex-1">
        <Dock />
        <main className="flex min-w-0 flex-1 flex-col">
          <TabStrip />
          <Toolbar />
          <div className="flex min-h-0 flex-1 bg-white">
            <div className="flex flex-1 pl-4 pr-4 pt-4"><SuccessPage /></div>
            <Scrollbar />
          </div>
        </main>
      </div>
    </div>
  );
}
